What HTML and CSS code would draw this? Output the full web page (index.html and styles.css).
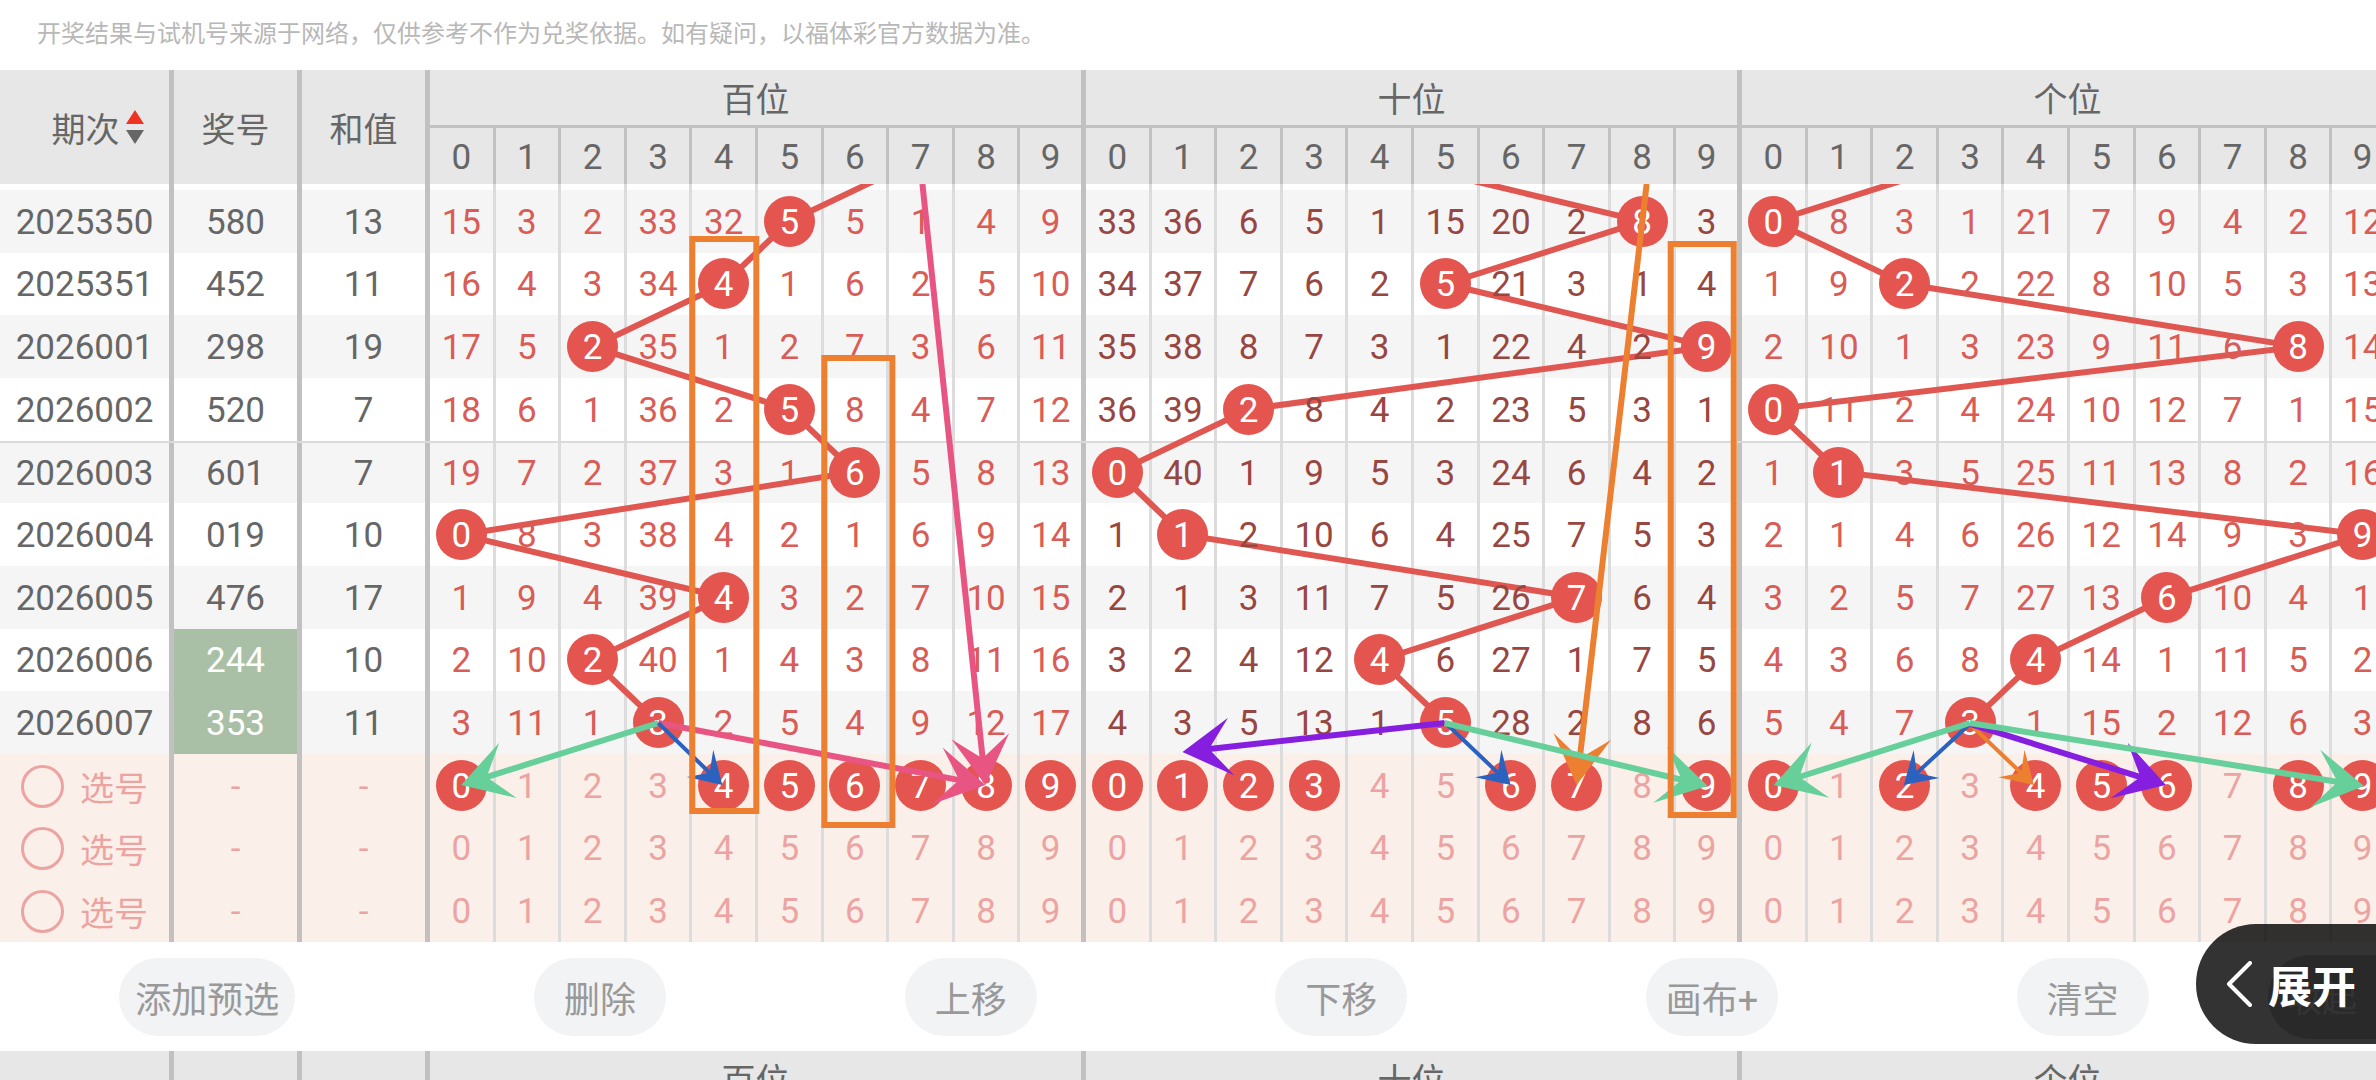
FILE: index.html
```html
<!DOCTYPE html>
<html lang="zh-CN">
<head>
<meta charset="utf-8">
<meta name="viewport" content="width=device-width, initial-scale=1">
<title>走势图</title>
<link rel="stylesheet" href="styles.css">
</head>
<body>
<main class="app">
  <p class="notice">开奖结果与试机号来源于网络，仅供参考不作为兑奖依据。如有疑问，以福体彩官方数据为准。</p>

  <section class="chart">
    <table class="trend">
      <thead class="trend-head" id="head"></thead>
      <tbody class="trend-body" id="body"></tbody>
    </table>
    <svg class="layer layer-lines" id="lines" viewBox="0 184 2397 758" preserveAspectRatio="none" aria-hidden="true"></svg>
    <svg class="layer layer-marks" id="marks" viewBox="0 184 2397 758" preserveAspectRatio="none" aria-hidden="true"></svg>
  </section>

  <div class="toolbar">
    <div class="toolbar-actions">
      <button class="pill" type="button">添加预选</button>
      <button class="pill" type="button">删除</button>
      <button class="pill" type="button">上移</button>
      <button class="pill" type="button">下移</button>
      <button class="pill" type="button">画布+</button>
      <button class="pill" type="button">清空</button>
    </div>
    <button class="fold" type="button">收起</button>
    <button class="expand" type="button">
      <svg class="chevron" viewBox="0 0 26 46" aria-hidden="true"><path d="M24 2 L3 23 L24 44"/></svg>
      <span>展开</span>
    </button>
  </div>

  <section class="chart">
    <table class="trend">
      <thead class="trend-head" id="head-next"></thead>
    </table>
  </section>
</main>
<script src="chart.js"></script>
</body>
</html>
```

FILE: styles.css
```css
* {
  box-sizing: border-box;
}

body {
  margin: 0;
  background: #fff;
  color: #666;
  font-family: Roboto, "Noto Sans CJK SC", sans-serif;
  font-size: 35px;
}

button {
  border: 0;
  padding: 0;
  font: inherit;
  color: inherit;
  background: none;
}

.app {
  height: 100vh;
  overflow: hidden;
}

.notice {
  margin: 0;
  height: 70px;
  padding: 0 37px;
  font-size: 24px;
  line-height: 68px;
  color: #b8b8b8;
}

/* Trend table */

.chart {
  position: relative;
  width: calc(100% + 22px);
}

.trend {
  display: block;
}

.trend-head,
.trend-row {
  display: grid;
  grid-template-columns: 174px 128px 128px repeat(30, minmax(0, 1fr));
}

.trend-head {
  grid-template-rows: 58px 56px;
  background: #e7e7e7;
}

.trend-head tr {
  display: contents;
}

.trend-body {
  display: grid;
  grid-template-rows: 6px repeat(12, minmax(0, 1fr));
  height: 758px;
}

th,
td {
  display: flex;
  align-items: center;
  justify-content: center;
  padding: 0;
  font-weight: 400;
  white-space: nowrap;
  border-right: 3px solid #dcdcdc;
}

thead th {
  border-color: #c1c1c1;
}

.side,
.edge,
.group {
  border-right: 5px solid #c1c1c1;
}

thead .side {
  grid-row: span 2;
  gap: 6px;
  font-size: 34px;
}

thead .sortable {
  padding-left: 26px;
}

thead .digit {
  padding-top: 2px;
}

.group {
  grid-column: span 10;
  border-bottom: 3px solid #c1c1c1;
  font-size: 34px;
}

.sort {
  width: 18px;
  height: 34px;
}

.sort-up {
  fill: #ee3322;
}

.sort-down {
  fill: #666;
}

.trend-row:nth-child(even) {
  background: #f5f5f5;
}

.trend-row.divided {
  border-top: 2px solid #dadada;
}

.trend-row.pick {
  background: #fbefe9;
  color: #eca4a2;
}

.trend-row:not(:first-child) .side,
.miss {
  padding-top: 2px;
}

.miss span {
  position: relative;
  z-index: 1;
}

.warm {
  color: #d95c56;
}

.dark {
  color: #984641;
}

.hot {
  background: #aac0a6;
  color: #fff;
}

.ball {
  position: relative;
  z-index: 1;
  flex: none;
  width: 51px;
  height: 51px;
  line-height: 53px;
  text-align: center;
}

.ball.on {
  border-radius: 50%;
  background: #e4554f;
  color: #fff;
}

.choice {
  display: flex;
  align-items: center;
  gap: 16px;
  font-size: 34px;
}

.radio {
  appearance: none;
  width: 43px;
  height: 43px;
  margin: 0;
  border: 3px solid #eca4a2;
  border-radius: 50%;
}

.layer {
  position: absolute;
  left: 0;
  top: 114px;
  width: 100%;
  height: 758px;
}

.layer-lines {
  fill: none;
  stroke: #df5750;
  stroke-width: 6;
}

.layer-marks {
  z-index: 2;
  pointer-events: none;
}

.frame {
  fill: none;
  stroke: #ec8030;
  stroke-width: 6;
}

/* Actions under the table */

.toolbar {
  position: relative;
  display: flex;
  align-items: center;
  height: 109px;
}

.toolbar-actions {
  flex: 1;
  display: flex;
  justify-content: space-around;
}

.pill {
  height: 78px;
  min-width: 132px;
  padding: 0 16px;
  border-radius: 39px;
  background: #f1f3f5;
  color: #999;
  font-size: 36px;
}

.fold {
  width: 108px;
  height: 84px;
  border-radius: 42px 0 0 42px;
  background: #ccc;
  color: #fff;
}

.expand {
  position: absolute;
  z-index: 3;
  right: 0;
  top: -18px;
  display: flex;
  align-items: center;
  gap: 16px;
  width: 180px;
  height: 120px;
  padding-left: 30px;
  border-radius: 60px 0 0 60px;
  background: rgba(0, 0, 0, 0.8);
  color: #fff;
  font-size: 44px;
  font-weight: 700;
}

.chevron {
  flex: none;
  width: 26px;
  height: 46px;
  fill: none;
  stroke: #fff;
  stroke-width: 4;
  stroke-linecap: round;
  stroke-linejoin: round;
}
```

FILE: chart.js
```js
const GROUPS = [
  { name: '百位', tone: 'warm', start: [15, 3, 2, 33, 32, 0, 5, 1, 4, 9], before: 7, picks: [0, 4, 5, 6, 7, 8, 9] },
  { name: '十位', tone: 'dark', start: [33, 36, 6, 5, 1, 15, 20, 2, 0, 3], before: 4, picks: [0, 1, 2, 3, 6, 7, 9] },
  { name: '个位', tone: 'warm', start: [0, 8, 3, 1, 21, 7, 9, 4, 2, 12], before: 3, picks: [0, 2, 4, 5, 6, 8, 9] }
];

const DRAWS = [
  ['2025350', '580'], ['2025351', '452'], ['2026001', '298'],
  ['2026002', '520'], ['2026003', '601'], ['2026004', '019'],
  ['2026005', '476'], ['2026006', '244'], ['2026007', '353']
];

const DIGITS = [0, 1, 2, 3, 4, 5, 6, 7, 8, 9];
const edge = d => (d === 9 ? ' edge' : '');

function headMarkup() {
  const sort = '<svg class="sort" viewBox="0 0 18 34" aria-hidden="true">' +
    '<path class="sort-up" d="M9 0 L18 14 H0 Z"/><path class="sort-down" d="M0 20 H18 L9 34 Z"/></svg>';
  return '<tr><th class="side sortable" scope="col">期次' + sort + '</th>' +
    '<th class="side" scope="col">奖号</th><th class="side" scope="col">和值</th>' +
    GROUPS.map(g => `<th class="group" scope="colgroup" colspan="10">${g.name}</th>`).join('') + '</tr><tr>' +
    GROUPS.map(() => DIGITS.map(d => `<th class="digit${edge(d)}" scope="col">${d}</th>`).join('')).join('') + '</tr>';
}

function bodyMarkup() {
  const counts = GROUPS.map(g => g.start.slice());
  let html = '<tr class="trend-row">' + '<td class="side"></td>'.repeat(3) +
    GROUPS.map(() => DIGITS.map(d => `<td class="cell${edge(d)}"></td>`).join('')).join('') + '</tr>';

  DRAWS.forEach(([issue, number], row) => {
    const sum = [...number].reduce((a, c) => a + Number(c), 0);
    html += `<tr class="trend-row${row === 4 ? ' divided' : ''}"><td class="side">${issue}</td>` +
      `<td class="side${row >= 7 ? ' hot' : ''}">${number}</td><td class="side">${sum}</td>`;
    GROUPS.forEach((group, g) => {
      const hit = Number(number[g]);
      DIGITS.forEach(d => {
        if (row > 0) counts[g][d] = d === hit ? 0 : counts[g][d] + 1;
        html += d === hit
          ? `<td class="cell${edge(d)}"><span class="ball on">${d}</span></td>`
          : `<td class="miss ${group.tone}${edge(d)}"><span>${counts[g][d]}</span></td>`;
      });
    });
    html += '</tr>';
  });

  for (let row = 0; row < 3; row++) {
    html += '<tr class="trend-row pick"><td class="side"><label class="choice">' +
      '<input class="radio" type="radio" name="choice">选号</label></td>' +
      '<td class="side">-</td><td class="side">-</td>';
    GROUPS.forEach(group => {
      DIGITS.forEach(d => {
        const on = row === 0 && group.picks.includes(d) ? ' on' : '';
        html += `<td class="cell${edge(d)}"><button class="ball${on}" type="button">${d}</button></td>`;
      });
    });
    html += '</tr>';
  }
  return html;
}

/* Lines joining the drawn digits of each group */
function linesMarkup() {
  return GROUPS.map((group, g) => {
    const digits = [group.before, ...DRAWS.map(draw => Number(draw[1][g]))];
    const points = digits.map((d, i) => {
      const x = 461 + g * 656 + d * 65.6;
      const y = 190 + (i - 0.5) * 62.667;
      return x.toFixed(1) + ',' + y.toFixed(1);
    });
    return `<polyline points="${points.join(' ')}"/>`;
  }).join('');
}

/* Hand-drawn marks: arrows as [x1, y1, x2, y2, colour, small], frames as [x, y, width, height] */
const PINK = '#e85583', GREEN = '#67cf9a', BLUE = '#2b62c0', PURPLE = '#861ee0', ORANGE = '#ec8030';

const ARROWS = [
  [922, 184, 985, 785, PINK],
  [658, 723, 985, 785, PINK],
  [658, 723, 461, 785, GREEN],
  [658, 723, 722, 785, BLUE, true],
  [1444, 723, 1182, 752, PURPLE],
  [1646, 184, 1576, 785, ORANGE],
  [1445, 723, 1510, 785, BLUE, true],
  [1444, 723, 1707, 786, GREEN],
  [1969, 724, 1903, 785, BLUE, true],
  [1969, 724, 2033, 785, ORANGE, true],
  [1969, 724, 2165, 785, PURPLE],
  [1969, 723, 1773, 785, GREEN],
  [1969, 723, 2363, 786, GREEN]
];

const FRAMES = [
  [692, 239, 64, 572],
  [824, 358, 68, 467],
  [1670, 244, 63, 571]
];

function marksMarkup() {
  const arrows = ARROWS.map(([x1, y1, x2, y2, colour, small]) => {
    const length = Math.hypot(x2 - x1, y2 - y1).toFixed(1);
    const angle = (Math.atan2(y2 - y1, x2 - x1) * 180 / Math.PI).toFixed(2);
    const [back, wing, notch, half] = small ? [31, 19, 19, 2] : [49, 29, 29, 3];
    return `<path fill="${colour}" transform="translate(${x2} ${y2}) rotate(${angle})" ` +
      `d="M0 0 L-${back} -${wing} L-${notch} -${half} H-${length} V${half} H-${notch} L-${back} ${wing} Z"/>`;
  });
  const frames = FRAMES.map(([x, y, w, h]) => `<rect class="frame" x="${x}" y="${y}" width="${w}" height="${h}"/>`);
  return arrows.join('') + frames.join('');
}

document.getElementById('head').innerHTML = headMarkup();
document.getElementById('head-next').innerHTML = headMarkup();
document.getElementById('body').innerHTML = bodyMarkup();
document.getElementById('lines').innerHTML = linesMarkup();
document.getElementById('marks').innerHTML = marksMarkup();
```
